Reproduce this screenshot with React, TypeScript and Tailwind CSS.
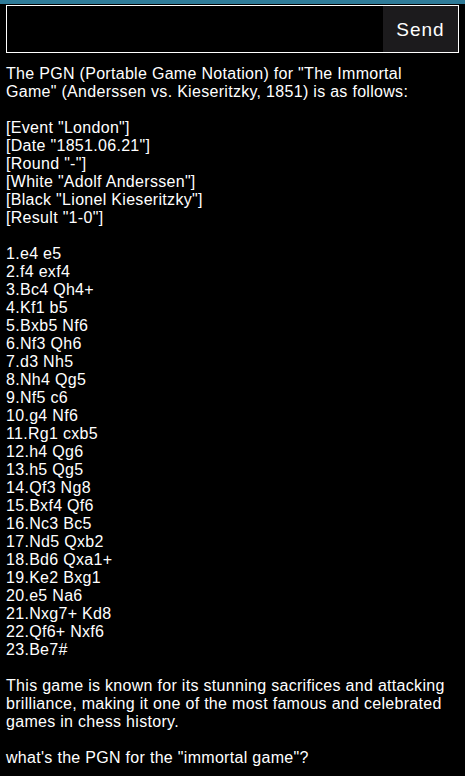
import React from "react";

const moves = [
  "1.e4 e5",
  "2.f4 exf4",
  "3.Bc4 Qh4+",
  "4.Kf1 b5",
  "5.Bxb5 Nf6",
  "6.Nf3 Qh6",
  "7.d3 Nh5",
  "8.Nh4 Qg5",
  "9.Nf5 c6",
  "10.g4 Nf6",
  "11.Rg1 cxb5",
  "12.h4 Qg6",
  "13.h5 Qg5",
  "14.Qf3 Ng8",
  "15.Bxf4 Qf6",
  "16.Nc3 Bc5",
  "17.Nd5 Qxb2",
  "18.Bd6 Qxa1+",
  "19.Ke2 Bxg1",
  "20.e5 Na6",
  "21.Nxg7+ Kd8",
  "22.Qf6+ Nxf6",
  "23.Be7#",
];

const tags = [
  '[Event "London"]',
  '[Date "1851.06.21"]',
  '[Round "-"]',
  '[White "Adolf Anderssen"]',
  '[Black "Lionel Kieseritzky"]',
  '[Result "1-0"]',
];

export default function App() {
  return (
    <div className="min-h-[776px] bg-black text-white font-['Liberation_Sans',Arial,sans-serif]">
      {/* top bar */}
      <div className="h-[4px] bg-[#2f7b98]" />
      <div className="px-[6px] pt-[1px]">
        {/* input */}
        <div className="flex h-[48px] border border-white">
          <input className="flex-1 bg-black outline-none text-white px-2" />
          <button className="w-[75px] bg-[#1c1b1d] pt-[3px] text-[19px] tracking-[1px] text-white">
            Send
          </button>
        </div>

        {/* answer */}
        <div className="pt-[12px] pr-[7px] text-[16px] leading-[18px] tracking-[0.3px]">
          <p>
            The PGN (Portable Game Notation) for "The Immortal Game" (Anderssen
            vs. Kieseritzky, 1851) is as follows:
          </p>
          <div className="mt-[18px]">
            {tags.map((t, i) => (
              <div key={i}>{t}</div>
            ))}
          </div>
          <div className="mt-[18px]">
            {moves.map((m, i) => (
              <div key={i}>{m}</div>
            ))}
          </div>
          <p className="mt-[18px]">
            This game is known for its stunning sacrifices and attacking
            brilliance, making it one of the most famous and celebrated games
            in chess history.
          </p>
          <p className="mt-[18px]">what's the PGN for the "immortal game"?</p>
        </div>
      </div>
    </div>
  );
}
